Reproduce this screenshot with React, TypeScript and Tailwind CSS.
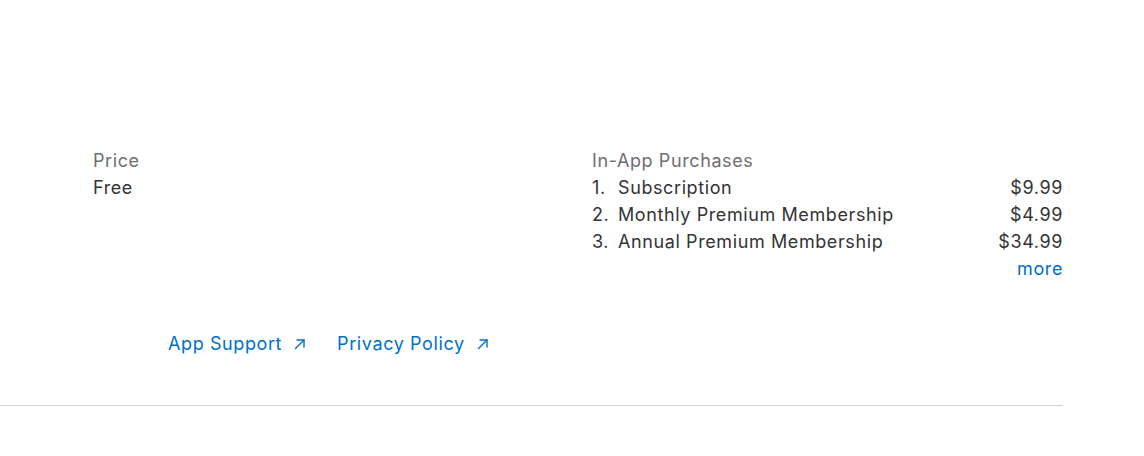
const purchases = [
  { name: 'Subscription', price: '$9.99' },
  { name: 'Monthly Premium Membership', price: '$4.99' },
  { name: 'Annual Premium Membership', price: '$34.99' },
]

function ArrowUpRight() {
  return (
    <svg viewBox="0 0 12 12" className="h-[12px] w-[12px]" fill="none" stroke="currentColor" strokeWidth="1.4" strokeLinecap="round">
      <path d="M1.5 10.5 L10 2" />
      <path d="M3 2 H10 V9" />
    </svg>
  )
}

export default function App() {
  return (
    <div className="min-h-[456px] bg-white font-['Inter',sans-serif] text-[18px] leading-[27px] tracking-[0.6px] text-[#333336]">
      <div className="pl-[93px] pr-[81px] pt-[147px]">
        <div className="grid grid-cols-2 gap-[28px]">
          <div>
            <div className="text-[#6e6e73]">Price</div>
            <div>Free</div>
          </div>
          <div>
            <div className="text-[#6e6e73]">In-App Purchases</div>
            <ol>
              {purchases.map((p, i) => (
                <li key={p.name} className="flex justify-between">
                  <span className="flex">
                    <span className="w-[26px]">{i + 1}.</span>
                    <span>{p.name}</span>
                  </span>
                  <span>{p.price}</span>
                </li>
              ))}
            </ol>
            <div className="text-right">
              <a className="text-[#0070c9]">more</a>
            </div>
          </div>
        </div>
        <div className="mt-[48px] flex gap-[31px] pl-[75px] text-[#0070c9]">
          <a className="flex items-center gap-[12px]">
            App Support <ArrowUpRight />
          </a>
          <a className="flex items-center gap-[12px]">
            Privacy Policy <ArrowUpRight />
          </a>
        </div>
      </div>
      <div className="mt-[48px] mr-[81px] h-px bg-[#d2d2d7]" />
    </div>
  )
}
